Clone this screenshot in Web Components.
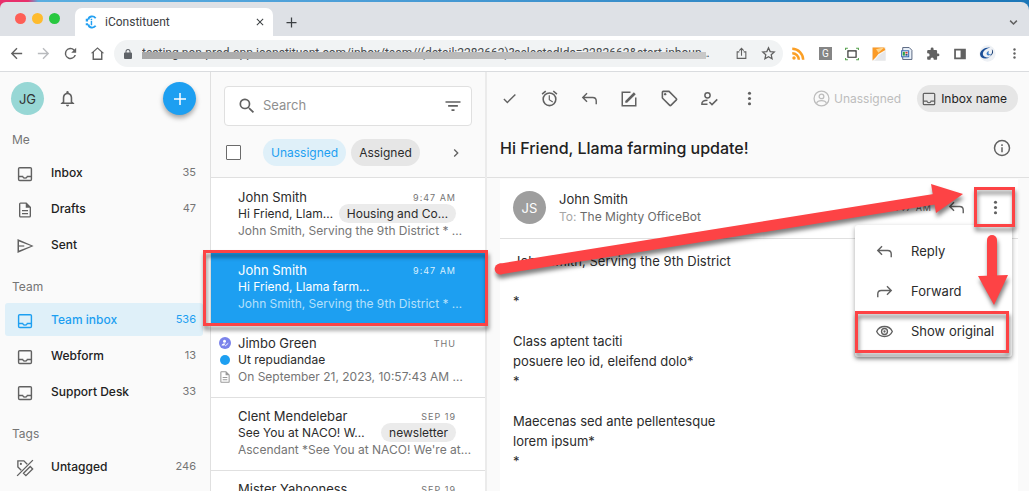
<!DOCTYPE html>
<html lang="en">
<head>
<meta charset="utf-8">
<title>iConstituent</title>
<style>
    html, body { height: 100%; }
    body {
        margin: 0;
        overflow: hidden;
        position: relative;
        font-family: Inter, "Liberation Sans", sans-serif;
        font-size: 13px;
        color: #2b2b2b;
        background: #fafafa;
        --accent: #1d9ff1;
        --accent-soft: #dff0f9;
        --muted: #757575;
        --line: #e0e0e0;
        --chip: #e6e6e6;
        --red: #fd4345;
    }
</style>
</head>
<body>
<mail-page></mail-page>

<script>
const ICONS = {
    back: '<path d="M20 11H7.800l5.600-5.600L12 4l-8 8 8 8 1.400-1.400L7.800 13H20z"/>',
    forwardNav: '<path d="M4 11h12.200l-5.600-5.600L12 4l8 8-8 8-1.400-1.400L16.200 13H4z"/>',
    reload: '<path d="M17.650 6.350A8 8 0 1 0 19.730 14h-2.080A6 6 0 1 1 12 6c1.660 0 3.140.690 4.220 1.780L13 11h7V4z"/>',
    home: '<path d="M12 3 2.500 11.500H5V21h14v-9.500h2.500zM7 19V9.900l5-4.500 5 4.500V19z"/>',
    lock: '<path d="M18 9h-1V7A5 5 0 0 0 7 7v2H6a2 2 0 0 0-2 2v9a2 2 0 0 0 2 2h12a2 2 0 0 0 2-2v-9a2 2 0 0 0-2-2zM9 7a3 3 0 0 1 6 0v2H9z"/>',
    share: '<path fill="none" stroke="currentColor" stroke-width="2" d="M8 9H4v12h16V9h-4M12 16V3M8 6.500 12 2.500l4 4"/>',
    star: '<path fill="none" stroke="currentColor" stroke-width="2" d="m12 3 2.700 6 6.500.600-4.900 4.300 1.400 6.400L12 17l-5.700 3.300 1.400-6.400-4.900-4.300 6.500-.600z"/>',
    close: '<path d="m19 6.400-1.400-1.400L12 10.600 6.400 5 5 6.400l5.600 5.600L5 17.600 6.400 19l5.600-5.600 5.600 5.600 1.400-1.400-5.600-5.600z"/>',
    plus: '<path d="M20 13h-7v7h-2v-7H4v-2h7V4h2v7h7z"/>',
    down: '<path fill="none" stroke="currentColor" stroke-width="4" d="m3 7 9 9 9-9"/>',
    right: '<path d="M8.600 16.600 13.200 12 8.600 7.400 10 6l6 6-6 6z"/>',
    more: '<circle cx="12" cy="4.500" r="2.200"/><circle cx="12" cy="12" r="2.200"/><circle cx="12" cy="19.500" r="2.200"/>',
    puzzle: '<path d="M20.500 11H19V7a2 2 0 0 0-2-2h-4V3.500a2.500 2.500 0 0 0-5 0V5H4a2 2 0 0 0-2 2v3.800h1.500a2.700 2.700 0 0 1 0 5.400H2V20c0 1.100.900 2 2 2h3.800v-1.500a2.700 2.700 0 0 1 5.400 0V22H17a2 2 0 0 0 2-2v-4h1.500a2.500 2.500 0 0 0 0-5z"/>',
    panel: '<path fill-rule="evenodd" d="M2 3v18h20V3zm3 3h8v12H5z"/>',
    bell: '<path d="M12 22a2 2 0 0 0 2-2h-4c0 1.100.900 2 2 2zm6-6v-5c0-3.070-1.630-5.640-4.500-6.320V4a1.500 1.500 0 0 0-3 0v.680C7.640 5.360 6 7.920 6 11v5l-2.500 2v1h17v-1zm-2 1H8v-6c0-2.480 1.510-4.500 4-4.500s4 2.020 4 4.500z"/>',
    inbox: '<path d="M19 2.500H5A2.500 2.500 0 0 0 2.500 5v14A2.500 2.500 0 0 0 5 21.500h14a2.500 2.500 0 0 0 2.500-2.500V5A2.500 2.500 0 0 0 19 2.500zm.600 17H4.400v-3.300h4a4 4 0 0 0 7.200 0h4zm0-5.100h-5.200a2.400 2.400 0 0 1-4.800 0H4.400V4.500h15.200z"/>',
    doc: '<path d="M8 16h8v1.700H8zm0-4h8v1.700H8zm6-10H6a2 2 0 0 0-2 2v16c0 1.100.890 2 1.990 2H18a2 2 0 0 0 2-2V8zm4.200 18.200H5.800V3.800H13V9h5.200z"/>',
    send: '<path d="M4 6v12l16-6zm-2-3.200L23.500 12 2 21.200z" fill-rule="evenodd"/><path d="M3 11.200h8v1.600H3z"/>',
    untagged: '<g fill="none" stroke="currentColor" stroke-width="1.800"><path d="M7 15 2.500 10.500V2.500h8L15 7M1.500 22.500l21-21M19 10l3.200 3.200-9 9L10 19z"/></g><circle cx="6.500" cy="6.500" r="1.400"/>',
    search: '<path d="M15.500 14h-.790l-.280-.270A6.500 6.500 0 1 0 13.730 14.430l.270.280v.790l5 4.990L20.490 19zm-6 0a4.500 4.500 0 1 1 0-9 4.500 4.500 0 0 1 0 9z"/>',
    filter: '<path d="M10 18.500h4v-2.200h-4zM2 5.500v2.200h20V5.500zM5.500 13h13v-2.200h-13z"/>',
    check: '<path d="M9 16.200 4.800 12l-1.400 1.400L9 19 21 7l-1.400-1.400z"/>',
    alarm: '<path d="m22 5.700-4.600-3.900-1.300 1.500 4.600 3.900zM7.900 3.400 6.600 1.900 2 5.700l1.300 1.500zM12.500 8H11v6l4.700 2.900.800-1.200-4-2.400zM12 4a9 9 0 1 0 0 18 9 9 0 0 0 0-18zm0 16a7 7 0 1 1 0-14 7 7 0 0 1 0 14z"/>',
    reply: '<path fill="none" stroke="currentColor" stroke-width="2" d="M8.500 4.500 2.500 10.500l6 6M3 10.500h13.500c3.500 0 5 2 5 5V20"/>',
    forward: '<path fill="none" stroke="currentColor" stroke-width="2" d="m15.500 4.500 6 6-6 6M21 10.500H7.500c-3.500 0-5 2-5 5V20"/>',
    compose: '<path fill="none" stroke="currentColor" stroke-width="2" d="M14 3H3v18h18V10"/><path d="M7 14.500 18.500 3l2.500 2.500L9.500 17H7z"/>',
    tag: '<path d="M21.400 11.600 12.400 2.600C12 2.200 11.500 2 11 2H4a2 2 0 0 0-2 2v7c0 .550.220 1.050.590 1.420l9 9c.360.360.860.580 1.410.580s1.050-.220 1.410-.590l7-7a2 2 0 0 0 0-2.820zM13 20 4 11V4h7l9 9z"/><circle cx="6.500" cy="6.500" r="1.500"/>',
    assign: '<g fill="none" stroke="currentColor" stroke-width="2"><circle cx="10" cy="7" r="3.500"/><path d="M10 19H2.500c-.500-3.500 3-5.500 7.500-5.500M12.500 16l3.500 3.500 7-7"/></g>',
    account: '<g fill="none" stroke="currentColor" stroke-width="1.800"><circle cx="12" cy="12" r="10.500"/><circle cx="12" cy="9" r="3.300"/><path d="M5 19c1-3 4-4 7-4s6 1 7 4"/></g>',
    info: '<path d="M11 7h2v2.300h-2zm0 4h2v6.500h-2zm1-10a11 11 0 1 0 0 22 11 11 0 0 0 0-22zm0 20a9 9 0 1 1 0-18 9 9 0 0 1 0 18z"/>',
    eye: '<g fill="none" stroke="currentColor" stroke-width="1.900"><path d="M1 12c2-4.500 6-7 11-7s9 2.500 11 7c-2 4.500-6 7-11 7S3 16.500 1 12z"/><circle cx="12" cy="12" r="4.200"/></g><circle cx="12" cy="12" r="1.600"/>',
    rss: '<g fill="none" stroke="#fb9f25" stroke-width="4"><path d="M2 4.500A17.500 17.500 0 0 1 19.500 22M2 11.500A10.500 10.500 0 0 1 12.500 22"/></g><circle cx="4.800" cy="19.300" r="2.800" fill="#fb9f25"/>',
    capture: '<path fill="none" stroke="#2f2f2f" stroke-width="2" d="M5 6.500h14v11H5z"/><path fill="none" stroke="#54a04c" stroke-width="1.800" d="M1 5V2h4M19 2h4v3M23 19v3h-4M5 22H1v-3"/>',
    carrot: '<path fill="#f6f6f6" stroke="#ececec" d="M1 1h22v22H1z"/><path fill="#fb9a26" d="M1 1h20l2 4-12 7-4 5-6 6z"/><path fill="#ffd48a" d="m7 4 4 6 10-9-7 1z"/><path fill="#e6e7ea" d="m12 14 11-7v16H5z"/>',
    sheet: '<path fill="#eaf1f9" stroke="#44546f" stroke-width="1.600" d="M5 1h12l5 5v17H5z"/><path fill="#3a6fb8" d="M2 6h15v13H2z"/><path fill="#fff" d="M4 8h11v9H4z"/><path fill="#2fa044" d="M5 9h4v7H5z"/><path fill="#d33c34" d="M10 9h4v3h-4z"/><path fill="#29447e" d="M10 13h4v3h-4z"/>',
    profile: '<circle cx="12" cy="12" r="11.500" fill="#eef1f5"/><path fill="#1c4f97" d="M16 3.500C8 2.500 1 8 1.500 13.500 2 19 9 20.500 15 17.500 9 18 5 16 5.500 12S10 5 16 3.500z"/><path fill="#3c7bc4" d="M14 8c-2.500 1-4 3.500-3 5.500s4 2 7-1c-2.500 1-4.500.500-4.500-1s0-2 .500-3.500z"/><path fill="#14396f" d="M18 6c3.500 3 2 8-3.500 10.500C18 14 19.500 10 18 6z"/>',
    favicon: '<g fill="none" stroke="#22a0f2" stroke-width="3.200"><path d="M20 5.500C16 .500 8 2 7.500 8M20 18.500C16 23.500 8 22 7.500 16"/></g><path fill="#22a0f2" d="M3 6.500h4v4.500H3zM3 14h4v3.500H3zM11.500 10H14v7.500h-2.500zM11.500 6.500H14v2h-2.500z"/>',
    person: '<circle cx="12" cy="12" r="12" fill="#7b83eb"/><g fill="#fff"><circle cx="11" cy="8.300" r="3"/><path d="M5 17c0-3 3-4.200 6-4.200l2 .400-3 3.800z"/></g><path fill="none" stroke="#fff" stroke-width="1.800" d="m11 15.500 2 2 5.500-5"/>',
    dot: '<circle cx="12" cy="12" r="12" fill="#1d9ff1"/>'
};

class AppIcon extends HTMLElement {
    constructor() {
        super();
        this.attachShadow({ mode: 'open' });
    }

    connectedCallback() {
        const size = this.getAttribute('size') || 18;
        this.shadowRoot.innerHTML = /* html */ `
            <style>
                :host { display: inline-flex; flex: none; }
                svg { display: block; fill: currentColor; }
            </style>
            <svg width="${size}" height="${size}" viewBox="0 0 24 24" aria-hidden="true">${ICONS[this.getAttribute('name')] || ''}</svg>
        `;
    }
}
customElements.define('app-icon', AppIcon);

class IconButton extends HTMLElement {
    constructor() {
        super();
        this.attachShadow({ mode: 'open' });
    }

    connectedCallback() {
        this.shadowRoot.innerHTML = /* html */ `
            <style>
                :host { display: inline-flex; flex: none; color: #616161; }
                button {
                    display: flex; align-items: center; justify-content: center;
                    width: var(--button-size, 24px); height: var(--button-size, 24px);
                    padding: 0; border: 0; border-radius: 50%;
                    background: none; color: inherit; cursor: pointer;
                }
                :host([raised]) { color: #fff; --button-size: 33px; }
                :host([raised]) button {
                    background: var(--accent);
                    box-shadow: 0 3px 5px rgba(0, 0, 0, .35);
                }
            </style>
            <button type="button" aria-label="${this.getAttribute('label')}">
                <app-icon name="${this.getAttribute('icon')}" size="${this.getAttribute('size') || 18}"></app-icon>
            </button>
        `;
    }
}
customElements.define('icon-button', IconButton);

class UserAvatar extends HTMLElement {
    constructor() {
        super();
        this.attachShadow({ mode: 'open' });
        this.shadowRoot.innerHTML = /* html */ `
            <style>
                :host {
                    display: flex; align-items: center; justify-content: center; flex: none;
                    width: 33px; height: 33px; border-radius: 50%;
                    font-size: 13px; background: #97d7d5; color: #333;
                }
                :host([grey]) { background: #9e9e9e; color: #fff; }
            </style>
            <slot></slot>
        `;
    }
}
customElements.define('user-avatar', UserAvatar);

class BrowserChrome extends HTMLElement {
    constructor() {
        super();
        this.attachShadow({ mode: 'open' });
        this.shadowRoot.innerHTML = /* html */ `
            <style>
                :host {
                    display: block; flex: none; color: #5f6368;
                    font-family: Roboto, "Liberation Sans", sans-serif; font-size: 12px;
                    background: linear-gradient(90deg, #e8306c 0, #e8306c 28px, #5aaee0 38px, #4d9fd8 340px, #1c77b8 100%);
                    padding-top: 2px;
                }
                .tabs {
                    display: flex; height: 34px; box-sizing: border-box; padding: 6px 7px 0 15px;
                    background: #dee1e6; border-radius: 6px 8px 0 0;
                }
                .lights { display: flex; gap: 6px; padding-top: 5px; width: 60px; }
                .lights i { width: 11px; height: 11px; border-radius: 50%; }
                .tab {
                    display: flex; align-items: center; gap: 7px; width: 198px; box-sizing: border-box;
                    padding: 0 4px 0 9px; background: #fff; border-radius: 7px 7px 0 0; color: #3c4043;
                }
                .tab span { flex: 1; }
                .new { padding: 2px 0 0 6px; color: #3c4043; }
                .more-tabs { margin-left: auto; padding-top: 5px; --button-size: 18px; }
                .bar {
                    display: flex; align-items: center; height: 35px; background: #fff;
                    border-bottom: 1px solid #dadcdf; padding: 0 3px 0 4px;
                }
                .nav { display: flex; gap: 3px; margin-right: 5px; }
                .address {
                    position: relative; display: flex; align-items: center; gap: 3px; flex: 1; min-width: 0;
                    height: 27px; box-sizing: border-box; padding: 0 3px 0 8px; border-radius: 14px; background: #f1f3f4;
                }
                input {
                    flex: 1; min-width: 0; margin: 0 0 0 5px; padding: 0 0 2px; border: 0; outline: 0;
                    background: none; font: inherit; color: #45484b; text-overflow: ellipsis;
                }
                .strike {
                    position: absolute; left: 28px; right: 77px; top: 12px; height: 7px;
                    background: linear-gradient(90deg, #a8a8a8, #c8c8c8);
                }
                .extensions { display: flex; align-items: center; gap: 3px; margin-left: 3px; }
                .g {
                    width: 13px; height: 13px; margin: 0 5px 0 6px; background: #858585; color: #fff;
                    font-size: 10px; line-height: 13px; text-align: center;
                }
            </style>
            <div class="tabs">
                <div class="lights">
                    <i style="background:#fe5f57"></i><i style="background:#febb2e"></i><i style="background:#28c840"></i>
                </div>
                <div class="tab">
                    <app-icon name="favicon" size="14"></app-icon>
                    <span>iConstituent</span>
                    <icon-button icon="close" size="12" label="Close tab" style="--button-size: 18px; color: #3c4043"></icon-button>
                </div>
                <icon-button class="new" icon="plus" size="15" label="New tab"></icon-button>
                <icon-button class="more-tabs" icon="down" size="9" label="Search tabs"></icon-button>
            </div>
            <div class="bar">
                <div class="nav">
                    <icon-button icon="back" size="17" label="Back"></icon-button>
                    <icon-button icon="forwardNav" size="17" label="Forward" style="color:#b9bbbe"></icon-button>
                    <icon-button icon="reload" size="17" label="Reload"></icon-button>
                    <icon-button icon="home" size="17" label="Home"></icon-button>
                </div>
                <div class="address">
                    <app-icon name="lock" size="12"></app-icon>
                    <input type="text" aria-label="Address" value="testing.non-prod-app.iconstituent.com/inbox/team//(detail:2282662)?selectedIds=2282662&amp;start-inboun…">
                    <div class="strike"></div>
                    <icon-button icon="share" size="13" label="Share"></icon-button>
                    <icon-button icon="star" size="15" label="Bookmark"></icon-button>
                </div>
                <div class="extensions">
                    <icon-button icon="rss" size="15" label="Feeds"></icon-button>
                    <span class="g">G</span>
                    <icon-button icon="capture" size="14" label="Capture"></icon-button>
                    <icon-button icon="carrot" size="14" label="Notes"></icon-button>
                    <icon-button icon="sheet" size="13" label="Sheet"></icon-button>
                    <icon-button icon="puzzle" size="14" label="Extensions"></icon-button>
                    <icon-button icon="panel" size="14" label="Side panel"></icon-button>
                    <icon-button icon="profile" size="17" label="Profile"></icon-button>
                    <icon-button icon="more" size="13" label="Menu"></icon-button>
                </div>
            </div>
        `;
    }
}
customElements.define('browser-chrome', BrowserChrome);

class NavItem extends HTMLElement {
    constructor() {
        super();
        this.attachShadow({ mode: 'open' });
    }

    connectedCallback() {
        this.shadowRoot.innerHTML = /* html */ `
            <style>
                :host { display: block; }
                a {
                    display: flex; align-items: center; height: 33px; box-sizing: border-box;
                    padding: 0 7px 0 11px; border-radius: 3px;
                    color: #212121; text-decoration: none; font-size: 12px; font-weight: 500;
                }
                app-icon { margin-right: 17px; padding-top: 2px; color: #616161; }
                .label { flex: 1; }
                .count { font-size: 11px; font-weight: 400; color: var(--muted); padding-bottom: 2px; }
                :host([active]) a { background: var(--accent-soft); }
                :host([active]) :is(a, app-icon, .count) { color: var(--accent); }
            </style>
            <a href="#">
                <app-icon name="${this.getAttribute('icon')}" size="18"></app-icon>
                <span class="label"><slot></slot></span>
                <span class="count">${this.getAttribute('count') || ''}</span>
            </a>
        `;
    }
}
customElements.define('nav-item', NavItem);

class NavSection extends HTMLElement {
    constructor() {
        super();
        this.attachShadow({ mode: 'open' });
    }

    connectedCallback() {
        this.shadowRoot.innerHTML = /* html */ `
            <style>
                :host { display: block; }
                h2 { margin: 0; padding-left: 7px; font-size: 12px; line-height: 32px; font-weight: 400; color: var(--muted); }
                .items { display: flex; flex-direction: column; gap: 3px; }
            </style>
            <h2>${this.getAttribute('heading')}</h2>
            <div class="items"><slot></slot></div>
        `;
    }
}
customElements.define('nav-section', NavSection);

class SideBar extends HTMLElement {
    constructor() {
        super();
        this.attachShadow({ mode: 'open' });
        this.shadowRoot.innerHTML = /* html */ `
            <style>
                :host { display: block; overflow: hidden; padding: 10px 7px 0 5px; border-right: 1px solid var(--line); }
                header { display: flex; align-items: center; gap: 11px; padding: 0 7px 0 6px; margin-bottom: 9px; }
                [raised] { margin-left: auto; }
                nav { display: flex; flex-direction: column; gap: 10px; }
            </style>
            <header>
                <user-avatar>JG</user-avatar>
                <icon-button icon="bell" size="19" label="Notifications"></icon-button>
                <icon-button icon="plus" size="18" label="New message" raised></icon-button>
            </header>
            <nav>
                <nav-section heading="Me">
                    <nav-item icon="inbox" count="35">Inbox</nav-item>
                    <nav-item icon="doc" count="47">Drafts</nav-item>
                    <nav-item icon="send">Sent</nav-item>
                </nav-section>
                <nav-section heading="Team">
                    <nav-item icon="inbox" count="536" active>Team inbox</nav-item>
                    <nav-item icon="inbox" count="13">Webform</nav-item>
                    <nav-item icon="inbox" count="33">Support Desk</nav-item>
                </nav-section>
                <nav-section heading="Tags">
                    <nav-item icon="untagged" count="246">Untagged</nav-item>
                </nav-section>
            </nav>
        `;
    }
}
customElements.define('side-bar', SideBar);

class MessageRow extends HTMLElement {
    constructor() {
        super();
        this.attachShadow({ mode: 'open' });
    }

    connectedCallback() {
        const tag = this.getAttribute('tag');
        this.shadowRoot.innerHTML = /* html */ `
            <style>
                :host { display: block; background: #fff; border-bottom: 1px solid var(--line); }
                .row {
                    display: grid; grid-template-columns: 13px minmax(0, 1fr) auto; grid-auto-rows: 17px;
                    align-items: center; column-gap: 7px; height: 72px; box-sizing: border-box;
                    padding: 9px 29px 0 7px; font-size: 12px;
                }
                .row > * { white-space: nowrap; }
                app-icon { justify-self: center; color: #9a9a9a; }
                .from { font-size: 13px; }
                .time { justify-self: end; padding-top: 2px; font-size: 9px; letter-spacing: 1px; color: var(--muted); }
                .subject { grid-column: 2; }
                .tag {
                    justify-self: end; height: 19px; line-height: 19px; padding: 0 8px; border-radius: 10px;
                    background: #ebebeb;
                }
                .preview { grid-column: 2 / 4; color: var(--muted); }
                .i1 { grid-area: 1 / 1; } .i2 { grid-area: 2 / 1; } .i3 { grid-area: 3 / 1; }
                :host([selected]) { background: var(--accent); border-color: var(--accent); color: #fff; }
                :host([selected]) .time { color: #d9effd; }
                :host([selected]) .preview { color: #b5e0fb; }
            </style>
            <div class="row">
                ${this.hasAttribute('flagged') ? `
                <app-icon class="i1" name="person" size="12"></app-icon>
                <app-icon class="i2" name="dot" size="10"></app-icon>
                <app-icon class="i3" name="doc" size="14"></app-icon>` : '<span class="i1"></span>'}
                <span class="from">${this.getAttribute('from')}</span>
                <span class="time">${this.getAttribute('time')}</span>
                <span class="subject">${this.getAttribute('subject')}</span>
                ${tag ? `<span class="tag">${tag}</span>` : '<span></span>'}
                <span class="preview">${this.getAttribute('preview')}</span>
            </div>
        `;
    }
}
customElements.define('message-row', MessageRow);

class MessageList extends HTMLElement {
    constructor() {
        super();
        this.attachShadow({ mode: 'open' });
        this.shadowRoot.innerHTML = /* html */ `
            <style>
                :host { display: block; overflow: hidden; border-right: 2px solid #ebebeb; }
                header { height: 106px; box-sizing: border-box; border-bottom: 1px solid var(--line); padding: 14px 13px 0; }
                .search {
                    display: flex; align-items: center; gap: 6px; height: 40px; box-sizing: border-box;
                    padding: 0 6px 0 12px; border: 1px solid var(--line); border-radius: 4px;
                    background: #fff; color: #616161;
                }
                input[type=search] { flex: 1; min-width: 0; padding: 0 0 2px; border: 0; outline: 0; background: none; font: inherit; color: inherit; }
                input::placeholder { color: #8f8f8f; opacity: 1; }
                .filters { display: flex; align-items: center; gap: 5px; padding: 13px 7px 0 2px; }
                input[type=checkbox] {
                    appearance: none; width: 15px; height: 15px; margin: 0 17px 0 0;
                    border: 1px solid #6b6b6b; border-radius: 1px; background: #fff;
                }
                .chip {
                    height: 27px; padding: 0 8px; border: 0; border-radius: 14px; background: var(--chip);
                    font: inherit; font-size: 12px; color: #2b2b2b;
                }
                .chip.on { background: var(--accent-soft); color: var(--accent); }
                .filters icon-button { margin-left: auto; --button-size: 18px; }
                .rows { padding-top: 1px; background: #fff; }
            </style>
            <header>
                <div class="search">
                    <app-icon name="search" size="20"></app-icon>
                    <input type="search" placeholder="Search" aria-label="Search">
                    <icon-button icon="filter" size="18" label="Filter"></icon-button>
                </div>
                <div class="filters">
                    <input type="checkbox" aria-label="Select all">
                    <button type="button" class="chip on">Unassigned</button>
                    <button type="button" class="chip">Assigned</button>
                    <icon-button icon="right" size="16" label="More filters"></icon-button>
                </div>
            </header>
            <div class="rows">
                <message-row from="John Smith" time="9:47 AM" subject="Hi Friend, Llam…" tag="Housing and Co…" preview="John Smith, Serving the 9th District * …"></message-row>
                <message-row selected from="John Smith" time="9:47 AM" subject="Hi Friend, Llama farm…" preview="John Smith, Serving the 9th District * …"></message-row>
                <message-row flagged from="Jimbo Green" time="THU" subject="Ut repudiandae" preview="On September 21, 2023, 10:57:43 AM …"></message-row>
                <message-row from="Clent Mendelebar" time="SEP 19" subject="See You at NACO! W…" tag="newsletter" preview="Ascendant *See You at NACO! We're at…"></message-row>
                <message-row from="Mister Yahooness" time="SEP 19" subject="" preview=""></message-row>
            </div>
        `;
    }
}
customElements.define('message-list', MessageList);

class ActionMenu extends HTMLElement {
    constructor() {
        super();
        this.attachShadow({ mode: 'open' });
        this.shadowRoot.innerHTML = /* html */ `
            <style>
                :host {
                    display: block; width: 157px; box-sizing: border-box; padding: 6px 0; border-radius: 3px; background: #fff;
                    box-shadow: 0 2px 5px rgba(0, 0, 0, .35);
                }
                button {
                    display: flex; align-items: center; gap: 18px; width: 100%; height: 40px;
                    padding: 0 0 0 21px; border: 0; background: none; font: inherit; color: #2b2b2b; text-align: left;
                }
                app-icon { color: #616161; }
            </style>
            <button type="button"><app-icon name="reply" size="17"></app-icon>Reply</button>
            <button type="button"><app-icon name="forward" size="17"></app-icon>Forward</button>
            <button type="button"><app-icon name="eye" size="17"></app-icon>Show original</button>
        `;
    }
}
customElements.define('action-menu', ActionMenu);

class MessageDetail extends HTMLElement {
    constructor() {
        super();
        this.attachShadow({ mode: 'open' });
        this.shadowRoot.innerHTML = /* html */ `
            <style>
                :host { display: flex; flex-direction: column; min-width: 0; overflow: hidden; }
                header { height: 106px; box-sizing: border-box; border-bottom: 1px solid var(--line); padding: 13px 11px 0 10px; }
                .tools, .title, .owner, .inbox { display: flex; align-items: center; }
                .tools { gap: 16px; height: 27px; }
                .owner { margin-left: auto; gap: 4px; border: 0; padding: 0; background: none; font: inherit; font-size: 12px; color: #bdbdbd; }
                .inbox {
                    gap: 4px; height: 27px; padding: 0 11px 0 4px; border: 0; border-radius: 14px; background: var(--chip);
                    font: inherit; font-size: 12px; color: #212121;
                }
                .inbox app-icon { color: #616161; }
                .title { justify-content: space-between; padding: 24px 4px 0 3px; }
                h1 { margin: 0; font-size: 16px; line-height: 24px; font-weight: 500; color: #212121; }
                .card { position: relative; flex: 1; margin: 1px 11px 0 13px; background: #fff; }
                .head {
                    display: flex; align-items: center; height: 60px; box-sizing: border-box;
                    padding: 0 11px 2px 13px; border-bottom: 1px solid var(--line);
                }
                .who { flex: 1; margin-left: 13px; line-height: 17px; }
                .to { font-size: 12px; color: #6a6a6a; }
                .to span { color: #a6a6a6; }
                time { font-size: 9px; letter-spacing: 1px; color: #616161; margin-right: 12px; }
                .head icon-button + icon-button { margin-left: 15px; }
                .body { padding: 12px 13px; line-height: 20px; white-space: pre-line; color: #2b2b2b; }
                action-menu { position: absolute; right: 6px; top: 46px; }
            </style>
            <header>
                <div class="tools">
                    <icon-button icon="check" size="17" label="Done"></icon-button>
                    <icon-button icon="alarm" size="19" label="Snooze"></icon-button>
                    <icon-button icon="reply" size="17" label="Reply"></icon-button>
                    <icon-button icon="compose" size="18" label="Compose"></icon-button>
                    <icon-button icon="tag" size="19" label="Tag"></icon-button>
                    <icon-button icon="assign" size="18" label="Assign"></icon-button>
                    <icon-button icon="more" size="17" label="More"></icon-button>
                    <button type="button" class="owner"><app-icon name="account" size="17"></app-icon>Unassigned</button>
                    <button type="button" class="inbox"><app-icon name="inbox" size="16"></app-icon>Inbox name</button>
                </div>
                <div class="title">
                    <h1>Hi Friend, Llama farming update!</h1>
                    <icon-button icon="info" size="18" label="Details"></icon-button>
                </div>
            </header>
            <section class="card">
                <div class="head">
                    <user-avatar grey>JS</user-avatar>
                    <div class="who">
                        <div>John Smith</div>
                        <div class="to"><span>To:</span> The Mighty OfficeBot</div>
                    </div>
                    <time>9:47 AM</time>
                    <icon-button icon="reply" size="17" label="Reply"></icon-button>
                    <icon-button icon="more" size="17" label="More"></icon-button>
                </div>
                <div class="body">John Smith, Serving the 9th District

*

Class aptent taciti
posuere leo id, eleifend dolo*
*

Maecenas sed ante pellentesque
lorem ipsum*
*</div>
                <action-menu></action-menu>
            </section>
        `;
    }
}
customElements.define('message-detail', MessageDetail);

class GuideMarks extends HTMLElement {
    constructor() {
        super();
        this.attachShadow({ mode: 'open' });
        this.shadowRoot.innerHTML = /* html */ `
            <style>
                :host { position: absolute; inset: 0; pointer-events: none; }
                svg { display: block; width: 100%; height: 100%; overflow: visible; }
                g { filter: drop-shadow(1px 4px 2px rgba(0, 0, 0, .5)); }
                rect, line { fill: none; stroke: var(--red); }
                polygon { fill: var(--red); }
            </style>
            <svg aria-hidden="true">
                <g>
                    <rect x="204.500" y="251.500" width="282" height="73" stroke-width="3"/>
                    <rect x="975.500" y="188.500" width="38" height="37" stroke-width="3"/>
                    <rect x="856.500" y="312.500" width="151" height="39" stroke-width="3"/>
                </g>
                <g>
                    <line x1="500" y1="269" x2="501" y2="269" stroke-width="10.800" stroke-linecap="round"/>
                    <line x1="500" y1="269" x2="936" y2="199" stroke-width="10.800"/>
                    <polygon points="931,184 963,194 936,213"/>
                </g>
                <g>
                    <line x1="992" y1="240" x2="992" y2="241" stroke-width="10" stroke-linecap="round"/>
                    <line x1="992" y1="240" x2="992" y2="278" stroke-width="10"/>
                    <polygon points="978,276 1008,275 994,305"/>
                </g>
            </svg>
        `;
    }
}
customElements.define('guide-marks', GuideMarks);

class MailPage extends HTMLElement {
    constructor() {
        super();
        this.attachShadow({ mode: 'open' });
        this.shadowRoot.innerHTML = /* html */ `
            <style>
                :host { display: flex; flex-direction: column; height: 100%; }
                main { flex: 1; min-height: 0; display: grid; grid-template-columns: 211px 276px minmax(0, 1fr); grid-template-rows: minmax(0, 1fr); }
                side-bar, message-list { box-sizing: border-box; }
            </style>
            <browser-chrome></browser-chrome>
            <main>
                <side-bar></side-bar>
                <message-list></message-list>
                <message-detail></message-detail>
            </main>
            <guide-marks></guide-marks>
        `;
    }
}
customElements.define('mail-page', MailPage);
</script>
</body>
</html>
